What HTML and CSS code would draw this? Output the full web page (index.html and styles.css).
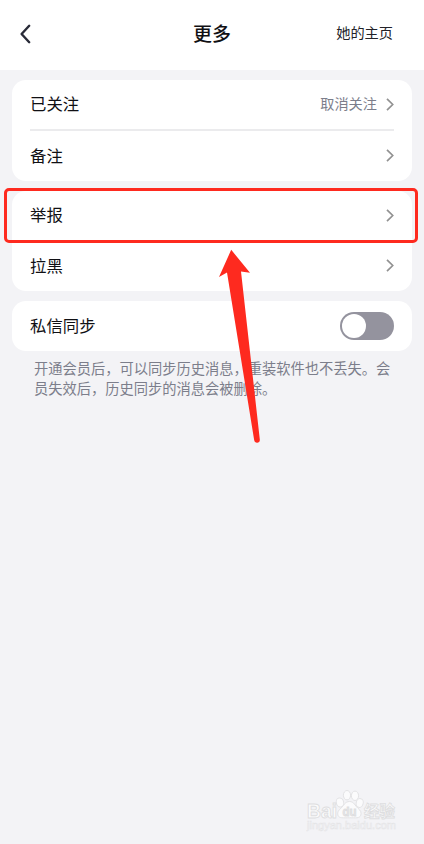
FILE: index.html
```html
<!DOCTYPE html>
<html lang="zh-CN">
<head>
  <meta charset="UTF-8" />
  <meta name="viewport" content="width=device-width, initial-scale=1.0"/>
  <title>更多</title>
  <link rel="stylesheet" href="styles.css">
</head>
<body>
  <header class="top-bar">
    <button class="back-btn" aria-label="返回">
      <svg width="12" height="20" viewBox="0 0 12 20"><path d="M10.2 1.8 2.6 10l7.6 8.2"/></svg>
    </button>
    <h1>更多</h1>
    <a class="home-link">她的主页</a>
  </header>

  <main class="settings">
    <section class="card">
      <div class="row">
        <span class="label">已关注</span>
        <span class="row-value">取消关注</span>
        <svg class="chevron" width="8" height="13" viewBox="0 0 8 13"><path d="M1 .9 6.7 6.5 1 12.1"/></svg>
      </div>
      <div class="row divided">
        <span class="label">备注</span>
        <svg class="chevron" width="8" height="13" viewBox="0 0 8 13"><path d="M1 .9 6.7 6.5 1 12.1"/></svg>
      </div>
    </section>

    <section class="card">
      <div class="row">
        <span class="label">举报</span>
        <svg class="chevron" width="8" height="13" viewBox="0 0 8 13"><path d="M1 .9 6.7 6.5 1 12.1"/></svg>
      </div>
      <div class="row second">
        <span class="label">拉黑</span>
        <svg class="chevron" width="8" height="13" viewBox="0 0 8 13"><path d="M1 .9 6.7 6.5 1 12.1"/></svg>
      </div>
      <div class="highlight"></div>
    </section>

    <section class="card">
      <div class="row">
        <span class="label">私信同步</span>
        <span class="toggle"><span class="knob"></span></span>
      </div>
    </section>
    <p class="hint">开通会员后，可以同步历史消息，重装软件也不丢失。会员失效后，历史同步的消息会被删除。</p>
  </main>

  <!-- arrow pointing at the report row -->
  <svg class="arrow" width="44" height="196" viewBox="0 0 44 196">
    <path d="M13.2 1.8 32 24.8 23 23.4 41.8 191.5a2.8 2.8 0 0 1-5.6.8L9 24.6 1 29z"/>
  </svg>

  <div class="watermark">
    <svg width="94" height="46" viewBox="0 0 94 46">
      <g class="paw">
        <ellipse cx="34" cy="14.5" rx="3.7" ry="4.6" transform="rotate(-15 34 14.5)"/>
        <ellipse cx="41" cy="7.2" rx="3.6" ry="4.7"/>
        <ellipse cx="49" cy="7.8" rx="3.6" ry="4.7"/>
        <ellipse cx="53.7" cy="15" rx="3.5" ry="4.5" transform="rotate(15 53.7 15)"/>
        <path d="M43.5 13.5c4.5 0 5.5 4.2 8.4 6.7 2.4 2.1 3.9 4.2 2.9 7-1.2 3.3-5 2.6-11.3 2.6s-10.6.7-11.6-2.6c-.9-2.9.8-5 3-7 2.8-2.5 4-6.7 8.6-6.7z"/>
      </g>
      <text class="brand" x="1" y="29.5" textLength="30" lengthAdjust="spacingAndGlyphs">Bai</text>
      <text class="du" x="36.5" y="27.5" textLength="14" lengthAdjust="spacingAndGlyphs">du</text>
      <text class="brand cn" x="58" y="29" textLength="31" lengthAdjust="spacingAndGlyphs">经验</text>
      <text class="url" x="1" y="41" textLength="89" lengthAdjust="spacingAndGlyphs">jingyan.baidu.com</text>
    </svg>
  </div>
</body>
</html>
```

FILE: styles.css
```css
* {
  box-sizing: border-box;
}
body {
  margin: 0;
  min-height: 844px;
  position: relative;
  overflow: hidden;
  background: #f3f3f6;
  color: #101014;
  font-family: "Noto Sans CJK SC", sans-serif;
}
.top-bar {
  display: grid;
  grid-template-columns: 1fr auto 1fr;
  align-items: center;
  height: 70px;
  padding: 0 31px 3px 19px;
  background: #fff;
}
.back-btn {
  display: flex;
  justify-self: start;
  padding: 0;
  border: none;
  background: none;
}
.back-btn path {
  fill: none;
  stroke: #292b38;
  stroke-width: 2.4;
  stroke-linecap: round;
  stroke-linejoin: round;
}
h1 {
  margin: 0 0 0 12px;
  padding-bottom: 2px;
  font-size: 19px;
  font-weight: 500;
  line-height: 28px;
}
.home-link {
  justify-self: end;
  padding-bottom: 3px;
  color: #222228;
  font-size: 14.2px;
  line-height: 20px;
}
.settings {
  display: flex;
  flex-direction: column;
  gap: 10px;
  padding: 9.5px 12px 0;
}
.card {
  position: relative;
  padding: 0 18px;
  border-radius: 14px;
  background: #fff;
}
.row {
  display: flex;
  align-items: center;
  height: 49.5px;
}
.label {
  padding-bottom: 2px;
  font-size: 16.4px;
  line-height: 24px;
}
.row.divided {
  height: 51.5px;
  border-top: 2px solid #ebebed;
}
.row.second {
  height: 51px;
}
.row-value {
  margin-left: auto;
  margin-right: 9px;
  padding-bottom: 2px;
  color: #7c7e8b;
  font-size: 14.2px;
  line-height: 22px;
}
.chevron {
  margin-left: auto;
}
.row-value + .chevron {
  margin-left: 0;
}
.chevron path {
  fill: none;
  stroke: #929292;
  stroke-width: 1.7;
}
.highlight {
  position: absolute;
  top: -3px;
  left: -8px;
  right: -6px;
  height: 55px;
  border: 3px solid #fe2a1f;
  border-radius: 5px;
}
.toggle {
  display: flex;
  align-items: center;
  margin-left: auto;
  width: 54px;
  height: 28px;
  padding: 2px;
  border-radius: 14px;
  background: #94939e;
}
.knob {
  width: 24px;
  height: 24px;
  border-radius: 50%;
  background: #fff;
}
.hint {
  margin: -3px 0 0;
  padding: 0 18px 0 22px;
  color: #7c7e8b;
  font-size: 14.25px;
  line-height: 20.4px;
}
.arrow {
  position: absolute;
  top: 248px;
  left: 218px;
  fill: #fe2a1f;
}
.watermark {
  position: absolute;
  left: 306px;
  top: 788px;
}
.watermark svg {
  display: block;
}
.paw {
  fill: #fbfbfc;
  stroke: #e3e3e5;
  stroke-width: 1;
}
.brand, .du {
  font-family: "Liberation Sans", sans-serif;
  font-weight: bold;
  fill: #fbfbfc;
  stroke: #dedee0;
  stroke-width: 0.9;
}
.brand {
  font-size: 20px;
}
.brand.cn {
  font-family: "Noto Sans CJK SC", sans-serif;
  font-size: 16px;
}
.du {
  font-size: 13px;
  fill: #e7e7e9;
}
.url {
  font-family: "Liberation Sans", sans-serif;
  font-size: 10px;
  fill: #fafafb;
  stroke: #e4e4e6;
  stroke-width: 0.5;
}
```
